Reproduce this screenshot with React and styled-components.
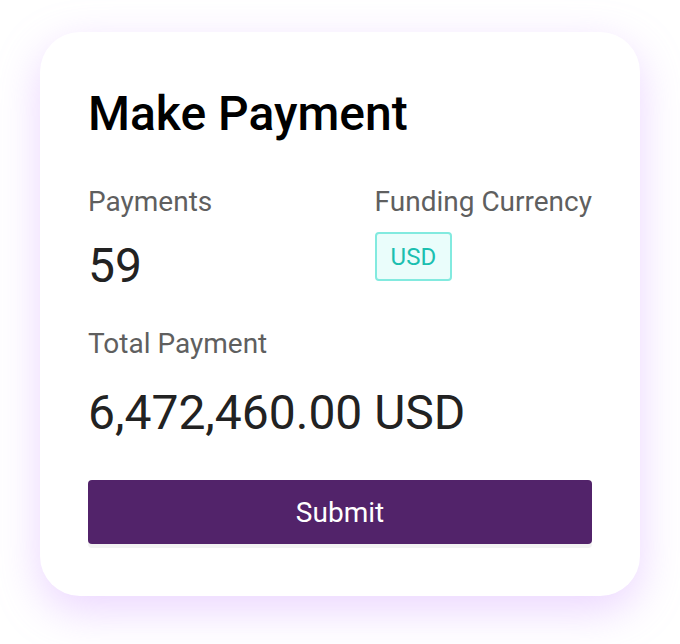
import React from "react";
import styled, { createGlobalStyle } from "styled-components";

const GlobalStyle = createGlobalStyle`
  body {
    margin: 0;
    background: #ffffff;
    font-family: Roboto, "Liberation Sans", sans-serif;
  }
`;

const Page = styled.div`
  width: 680px;
  height: 644px;
  padding: 32px 40px 0;
  box-sizing: border-box;
`;

const Card = styled.div`
  width: 600px;
  height: 564px;
  box-sizing: border-box;
  padding: 54px 48px 0;
  background: #ffffff;
  border-radius: 40px;
  box-shadow: 0 14px 44px rgba(205, 150, 255, 0.4);
`;

const Title = styled.h1`
  margin: 0;
  font-size: 48px;
  font-weight: 500;
  line-height: 56px;
  color: #000000;
`;

const Row = styled.div`
  display: flex;
  justify-content: space-between;
  margin-top: 44px;
`;

const Field = styled.div`
  display: flex;
  flex-direction: column;
  margin-top: ${(props) => props.top || 0}px;
`;

const Label = styled.div`
  font-size: 28px;
  line-height: 32px;
  color: #5f5f5f;
`;

const Value = styled.div`
  margin-top: ${(props) => props.gap || 20}px;
  font-size: 48px;
  line-height: 56px;
  color: #222222;
`;

const Badge = styled.span`
  align-self: flex-start;
  margin-top: 14px;
  padding: 0 14px;
  height: 49px;
  box-sizing: border-box;
  display: flex;
  align-items: center;
  border: 2px solid #82eadf;
  border-radius: 4px;
  background: #eafdfb;
  color: #1bbfb0;
  font-size: 24px;
`;

const Button = styled.button`
  margin-top: 39px;
  width: 100%;
  height: 64px;
  border: none;
  border-radius: 4px;
  background: #52236a;
  color: #ffffff;
  font-family: Roboto, "Liberation Sans", sans-serif;
  font-size: 28px;
  box-shadow: 0 4px 0 #f2f2f2;
  cursor: pointer;
`;

export default function App() {
  return (
    <>
      <GlobalStyle />
      <Page>
        <Card>
          <Title>Make Payment</Title>
          <Row>
            <Field>
              <Label>Payments</Label>
              <Value>59</Value>
            </Field>
            <Field>
              <Label>Funding Currency</Label>
              <Badge>USD</Badge>
            </Field>
          </Row>
          <Field top={34}>
            <Label>Total Payment</Label>
            <Value gap={25}>6,472,460.00 USD</Value>
          </Field>
          <Button>Submit</Button>
        </Card>
      </Page>
    </>
  );
}
